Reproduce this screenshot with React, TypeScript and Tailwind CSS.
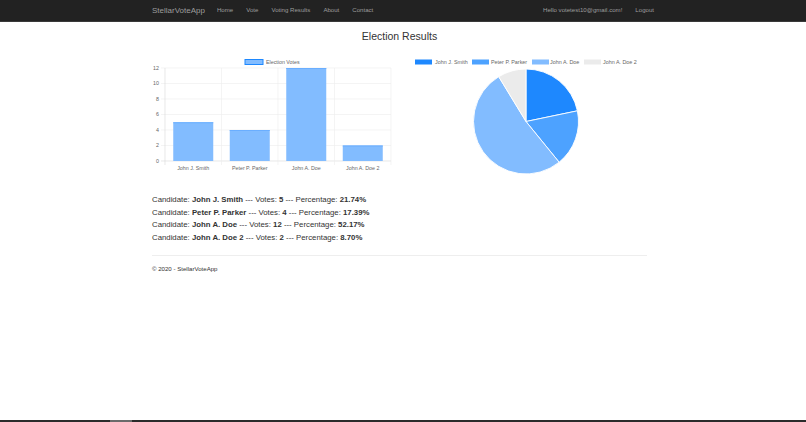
import React from "react";

const candidates = [
  { name: "John J. Smith", votes: 5, pct: "21.74%", color: "#1e88fe" },
  { name: "Peter P. Parker", votes: 4, pct: "17.39%", color: "#4da2ff" },
  { name: "John A. Doe", votes: 12, pct: "52.17%", color: "#82bcff" },
  { name: "John A. Doe 2", votes: 2, pct: "8.70%", color: "#ebebeb" },
];

function BarChart() {
  const ox = 148;
  const oy = 55;
  const x0 = 165 - ox;
  const x1 = 391 - ox;
  const yZero = 161 - oy;
  const unit = (161 - 68) / 12;
  const colW = (x1 - x0) / 4;
  const ticks = [0, 2, 4, 6, 8, 10, 12];
  return (
    <svg width={246} height={122} viewBox="0 0 246 122" className="block">
      <rect x={245 - ox} y={59.5 - oy} width={18} height={5} fill="#82bcff" stroke="#1e88fe" strokeWidth={1} />
      <text x={266 - ox} y={63.5 - oy} fontSize={5.3} fill="#666" fontFamily="Liberation Sans, Arial, sans-serif">
        Election Votes
      </text>
      {ticks.map((t) => {
        const y = yZero - t * unit;
        return (
          <g key={t}>
            <line x1={x0 - 4} x2={x1} y1={y} y2={y} stroke={t === 0 ? "#d8d8d8" : "#ececec"} strokeWidth={0.6} />
            <text x={x0 - 6} y={y + 1.8} fontSize={5.3} fill="#666" textAnchor="end" fontFamily="Liberation Sans, Arial, sans-serif">
              {t}
            </text>
          </g>
        );
      })}
      {[0, 1, 2, 3, 4].map((i) => {
        const x = x0 + i * colW;
        return <line key={i} x1={x} x2={x} y1={yZero - 12 * unit} y2={yZero + 4} stroke={i === 0 ? "#d8d8d8" : "#ececec"} strokeWidth={0.6} />;
      })}
      {candidates.map((c, i) => {
        const cx = x0 + colW * (i + 0.5);
        const h = c.votes * unit;
        return (
          <g key={c.name}>
            <rect x={cx - 20} y={yZero - h} width={40} height={h} fill="#82bcff" />
            <rect x={cx - 20} y={yZero - h} width={40} height={1} fill="#6aaeff" />
            <text x={cx} y={169.5 - oy} fontSize={5.3} fill="#666" textAnchor="middle" fontFamily="Liberation Sans, Arial, sans-serif">
              {c.name}
            </text>
          </g>
        );
      })}
    </svg>
  );
}

function PieChart() {
  const ox = 400;
  const oy = 55;
  const cx = 526 - ox;
  const cy = 121.5 - oy;
  const r = 52.5;
  const total = candidates.reduce((s, c) => s + c.votes, 0);
  let a = -Math.PI / 2;
  const slices = candidates.map((c) => {
    const sweep = (c.votes / total) * Math.PI * 2;
    const a0 = a;
    const a1 = a + sweep;
    a = a1;
    const p0 = [cx + r * Math.cos(a0), cy + r * Math.sin(a0)];
    const p1 = [cx + r * Math.cos(a1), cy + r * Math.sin(a1)];
    const large = sweep > Math.PI ? 1 : 0;
    return {
      c,
      d: `M ${cx} ${cy} L ${p0[0]} ${p0[1]} A ${r} ${r} 0 ${large} 1 ${p1[0]} ${p1[1]} Z`,
    };
  });
  const legend = [
    { x: 415, tx: 435 },
    { x: 472, tx: 491 },
    { x: 532, tx: 550 },
    { x: 584, tx: 603 },
  ];
  return (
    <svg width={247} height={124} viewBox="0 0 247 124" className="block">
      {candidates.map((c, i) => (
        <g key={c.name}>
          <rect x={legend[i].x - ox} y={59.5 - oy} width={17} height={5} fill={c.color} />
          <text x={legend[i].tx - ox} y={63.6 - oy} fontSize={5.4} fill="#666" fontFamily="Liberation Sans, Arial, sans-serif">
            {c.name}
          </text>
        </g>
      ))}
      {slices.map((s) => (
        <path key={s.c.name} d={s.d} fill={s.c.color} stroke="#fff" strokeWidth={0.9} strokeLinejoin="round" />
      ))}
    </svg>
  );
}

export default function App() {
  return (
    <div className="h-[422px] flex flex-col bg-white font-['Liberation_Sans',Arial,sans-serif] text-[#333] overflow-hidden">
      <nav className="h-[22px] shrink-0 bg-[#222] border-b border-[#3a3a3a]">
        <div className="ml-[152px] w-[502px] h-full flex items-center text-[#9d9d9d]">
          <span className="text-[8px] mr-[12px] leading-none">StellarVoteApp</span>
          <span className="text-[6.1px] mr-[13px] leading-none">Home</span>
          <span className="text-[6.1px] mr-[13px] leading-none">Vote</span>
          <span className="text-[6.1px] mr-[13px] leading-none">Voting Results</span>
          <span className="text-[6.1px] mr-[13px] leading-none">About</span>
          <span className="text-[6.1px] leading-none">Contact</span>
          <span className="ml-auto text-[6.1px] mr-[13px] leading-none">Hello votetest10@gmail.com!</span>
          <span className="text-[6.1px] leading-none">Logout</span>
        </div>
      </nav>
      <main className="flex-1">
        <div className="ml-[152px] w-[495px]">
          <h2 className="mt-[8.5px] text-center text-[10.5px] leading-[11.5px] font-normal">Election Results</h2>
          <div className="mt-[13px] flex h-[124px]">
            <div className="ml-[-4px] w-[252px]">
              <BarChart />
            </div>
            <div className="w-[247px]">
              <PieChart />
            </div>
          </div>
          <div className="mt-[15px] text-[7.8px] leading-[12.6px]">
            {candidates.map((c) => (
              <div key={c.name}>
                Candidate: <b>{c.name}</b> --- Votes: <b>{c.votes}</b> --- Percentage: <b>{c.pct}</b>
              </div>
            ))}
          </div>
          <hr className="mt-[10.5px] border-t border-[#eee]" />
          <footer className="mt-[8px] text-[6.1px] leading-[9px]">© 2020 - StellarVoteApp</footer>
        </div>
      </main>
      <div className="h-[2px] shrink-0 bg-[#2b2b2b] flex">
        <div className="ml-[110px] w-[22px] bg-[#6b6b6b]" />
      </div>
    </div>
  );
}
